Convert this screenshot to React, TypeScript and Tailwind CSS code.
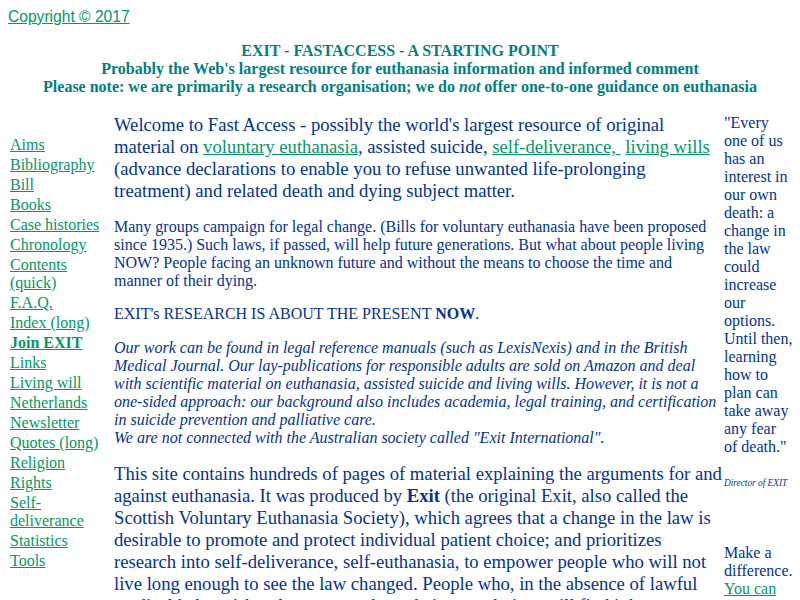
const navLinks = [
  "Aims",
  "Bibliography",
  "Bill",
  "Books",
  "Case histories",
  "Chronology",
  "Contents (quick)",
  "F.A.Q.",
  "Index (long)",
  "Join EXIT",
  "Links",
  "Living will",
  "Netherlands",
  "Newsletter",
  "Quotes (long)",
  "Religion",
  "Rights",
  "Self-deliverance",
  "Statistics",
  "Tools",
];

const linkCls = "text-[#009966] underline";

const App = () => {
  return (
    <div className="min-h-screen bg-white px-[8px] pt-[8px] font-['Liberation_Serif',serif] text-[#003399]">
      <div className="font-['Liberation_Sans',sans-serif] text-[15.6px] leading-[18px]">
        <a href="#" className={linkCls}>
          Copyright © 2017
        </a>
      </div>

      <div className="mt-[16px] text-center text-[16px] font-bold leading-[18px] text-[#008080]">
        <div>EXIT - FASTACCESS - A STARTING POINT</div>
        <div>Probably the Web's largest resource for euthanasia information and informed comment</div>
        <div>
          Please note: we are primarily a research organisation; we do <i>not</i> offer one-to-one
          guidance on euthanasia
        </div>
      </div>

      <div className="mt-[18px] flex items-start">
        {/* left nav */}
        <div className="ml-[2px] flex w-[96px] shrink-0 flex-col gap-[2px] pt-[22px] text-[16px] leading-[18px]">
          {navLinks.map((item) => (
            <a
              key={item}
              href="#"
              className={`${linkCls} ${item === "Join EXIT" ? "font-bold" : ""}`}
            >
              {item}
            </a>
          ))}
        </div>

        {/* main column */}
        <div className="ml-[8px] w-[608px] shrink-0">
          <p className="text-[18.67px] leading-[22px]">
            Welcome to Fast Access - possibly the world's largest resource of original material on{" "}
            <a href="#" className={linkCls}>
              voluntary euthanasia
            </a>
            , assisted suicide,{" "}
            <a href="#" className={linkCls}>
              {"self-deliverance,\u00a0"}
            </a>{" "}
            <a href="#" className={linkCls}>
              living wills
            </a>{" "}
            (advance declarations to enable you to refuse unwanted life-prolonging treatment) and
            related death and dying subject matter.
          </p>

          <p className="mt-[16px] text-[16px] leading-[18px]">
            Many groups campaign for legal change. (Bills for voluntary euthanasia have been proposed
            since 1935.) Such laws, if passed, will help future generations. But what about people
            living NOW? People facing an unknown future and without the means to choose the time and
            manner of their dying.
          </p>

          <p className="mt-[15px] text-[16px] leading-[18px]">
            EXIT's RESEARCH IS ABOUT THE PRESENT <b>NOW</b>.
          </p>

          <p className="mt-[16px] text-[16px] italic leading-[18px]">
            Our work can be found in legal reference manuals (such as LexisNexis) and in the British
            Medical Journal. Our lay-publications for responsible adults are sold on Amazon and deal
            with scientific material on euthanasia, assisted suicide and living wills. However, it is
            not a one-sided approach: our background also includes academia, legal training, and
            certification in suicide prevention and palliative care.
            <br />
            We are not connected with the Australian society called "Exit International".
          </p>

          <p className="mt-[16px] text-[18.67px] leading-[22px]">
            This site contains hundreds of pages of material explaining the arguments for and against
            euthanasia. It was produced by <b>Exit</b> (the original Exit, also called the Scottish
            Voluntary Euthanasia Society), which agrees that a change in the law is desirable to
            promote and protect individual patient choice; and prioritizes research into
            self-deliverance, self-euthanasia, to empower people who will not live long enough to see
            the law changed. People who, in the absence of lawful medical help, wish to learn{" "}
            <a href="#" className="text-[#990099] underline">
              more
            </a>{" "}
            about their own choices will find it here.
          </p>
        </div>

        {/* right column */}
        <div className="ml-[2px] w-[68.6px] shrink-0 text-[16px] leading-[18px]">
          <p>
            "Every one of us has an interest in our own death: a change in the law could increase our
            options. Until then, learning how to plan can take away any fear of death."
          </p>
          <p className="mt-[21px] text-[9.3px] italic leading-[12px]">Director of EXIT</p>
          <p className="mt-[55px]">
            Make a difference.{" "}
            <a href="#" className={linkCls}>
              You can help
            </a>
          </p>
        </div>
      </div>
    </div>
  );
};

export default App;
